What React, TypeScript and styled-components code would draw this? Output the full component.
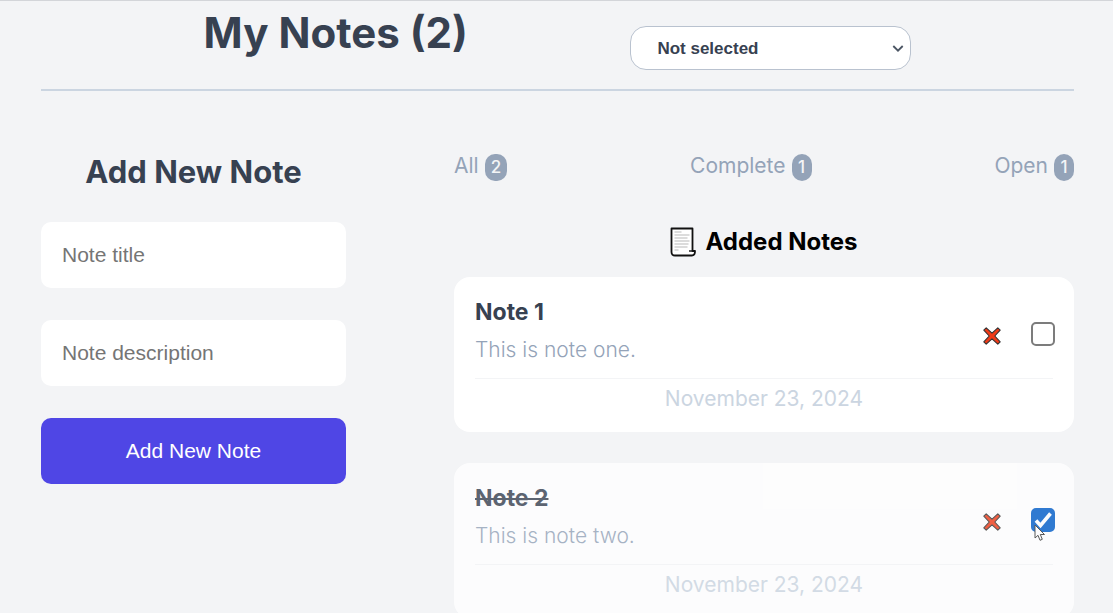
import React, { useState } from "react";
import styled, { createGlobalStyle } from "styled-components";

const GlobalStyle = createGlobalStyle`
  * { box-sizing: border-box; }
  html { scrollbar-width: none; background: #f3f4f6; }
  body { margin: 0; font-family: Inter, "Liberation Sans", sans-serif; color: #374151; }
  h1, h2, h3, p, ul { margin: 0; padding: 0; }
  button, input, select { font-family: "Liberation Sans", Arial, sans-serif; }
`;

const Page = styled.div`
  min-height: 100vh;
  padding: 0 39px 32px 41px;
  border-top: 1px solid #d3d5d9;
`;

const Header = styled.header`
  display: flex;
  justify-content: space-evenly;
  align-items: center;
  padding-top: 6px;
  border-bottom: 2px solid #cbd5e1;
`;

const Title = styled.h1`
  margin-bottom: 31px;
  font-size: 42px;
  line-height: 51px;
  font-weight: 700;
`;

const SelectWrap = styled.div`
  position: relative;
  width: 281px;
`;

const Select = styled.select`
  appearance: none;
  display: block;
  width: 100%;
  height: 44px;
  padding: 0 26px;
  border: 1px solid #b9c2cf;
  border-radius: 16px;
  background: #fff;
  color: #374151;
  font-size: 17px;
  font-weight: 700;
`;

const Chevron = styled.svg`
  position: absolute;
  right: 7px;
  top: 16px;
  pointer-events: none;
`;

const Main = styled.main`
  display: grid;
  grid-template-columns: minmax(0, 305fr) minmax(0, 620fr);
  gap: 108px;
  align-items: start;
  padding-top: 62px;
`;

const Form = styled.form`
  display: flex;
  flex-direction: column;
  gap: 32px;
`;

const FormTitle = styled.h2`
  font-size: 31px;
  line-height: 37px;
  font-weight: 700;
  text-align: center;
`;

const Field = styled.input`
  width: 100%;
  height: 66px;
  padding: 0 21px;
  border: 0;
  border-radius: 10px;
  background: #fff;
  font-size: 21px;
  &::placeholder { color: #757575; }
`;

const Submit = styled.button`
  height: 66px;
  border: 0;
  border-radius: 10px;
  background: #4f46e5;
  color: #fff;
  font-size: 21px;
`;

const Filters = styled.ul`
  display: flex;
  justify-content: space-between;
  list-style: none;
`;

const Filter = styled.button`
  display: flex;
  align-items: baseline;
  gap: 6px;
  padding: 0;
  border: 0;
  background: none;
  color: #94a3b8;
  font-family: Inter, sans-serif;
  font-size: 21px;
  line-height: 26px;
  font-weight: 400;
`;

const Badge = styled.span`
  min-width: 20px;
  padding: 3px 6px;
  border-radius: 10px;
  background: #94a3b8;
  color: #f3f4f6;
  font-size: 17px;
  line-height: 21px;
  font-weight: 500;
`;

const ListTitle = styled.h2`
  display: flex;
  justify-content: center;
  align-items: center;
  gap: 9px;
  margin: 46px 0 20px;
  color: #000;
  font-size: 24px;
  line-height: 30px;
  font-weight: 700;
`;

const Cards = styled.div`
  display: flex;
  flex-direction: column;
  gap: 31px;
`;

const Card = styled.article<{ $done: boolean }>`
  padding: 21px 21px 20px;
  border-radius: 16px;
  background: #fff;
  opacity: ${(p) => (p.$done ? 0.8 : 1)};
`;

const CardTop = styled.div`
  display: flex;
  justify-content: space-between;
  align-items: center;
  border-bottom: 1px solid #f3f4f6;
`;

const NoteTitle = styled.h3<{ $done: boolean }>`
  margin-bottom: 10px;
  font-size: 23px;
  line-height: 29px;
  font-weight: 700;
  text-decoration: ${(p) => (p.$done ? "line-through" : "none")};
`;

const NoteText = styled.p`
  padding-bottom: 15px;
  color: #94a3b8;
  font-size: 21px;
  line-height: 26px;
  font-weight: 300;
`;

const Actions = styled.div`
  display: flex;
  align-items: center;
  gap: 30px;
  margin-right: -2px;
  padding-bottom: 8px;
`;

const Delete = styled.button`
  display: flex;
  padding: 4px 0 0;
  border: 0;
  background: none;
`;

const CheckWrap = styled.div`
  position: relative;
  display: flex;
`;

const Check = styled.input`
  appearance: none;
  width: 24px;
  height: 24px;
  margin: 0;
  border: 2px solid #7c7c7c;
  border-radius: 5px;
  background: #fff;
  &:checked {
    border-color: #005cc8;
    background: #005cc8;
  }
`;

const Tick = styled.svg`
  position: absolute;
  inset: 0;
  pointer-events: none;
`;

const Pointer = styled.svg`
  position: absolute;
  left: 3px;
  top: 16px;
  pointer-events: none;
`;

const NoteDate = styled.time`
  display: block;
  padding-top: 7px;
  color: #cbd5e1;
  font-size: 21px;
  line-height: 26px;
  text-align: center;
`;

const PageIcon = () => (
  <svg width="26" height="30" viewBox="0 0 26 30" aria-hidden="true">
    <path d="M1.5 1.5h21v22.500h2.500c0 3-1 4.500-3 4.500H5c-2.300 0-3.500-1.300-3.500-3.500z" fill="#fff" stroke="#111" strokeWidth="1.800" strokeLinejoin="round" />
    <path d="M22.500 24h-3.500" stroke="#111" strokeWidth="1.400" />
    <path d="M4.500 5h7M4.500 8h15M4.500 11h13M4.500 14h15M4.500 17h14M4.500 20h13M4.500 23h4" stroke="#b9b9b9" strokeWidth="1.200" />
  </svg>
);

const CrossIcon = () => (
  <svg width="18" height="18" viewBox="0 0 18 18" aria-hidden="true">
    <path d="M3.200 .8 9 6.200 14.800 .8 17.200 3.200 11.800 9 17.200 14.800 14.800 17.200 9 11.800 3.200 17.200 .8 14.800 6.200 9 .8 3.200z" fill="#f03a17" stroke="#333" strokeWidth="1.100" strokeLinejoin="round" />
  </svg>
);

const notesData = [
  { id: 1, title: "Note 1", text: "This is note one.", date: "November 23, 2024", done: false },
  { id: 2, title: "Note 2", text: "This is note two.", date: "November 23, 2024", done: true },
];

export default function App() {
  const [notes, setNotes] = useState(notesData);
  const complete = notes.filter((n) => n.done).length;
  const filters = [
    { label: "All", count: notes.length },
    { label: "Complete", count: complete },
    { label: "Open", count: notes.length - complete },
  ];
  const toggle = (id: number) =>
    setNotes(notes.map((n) => (n.id === id ? { ...n, done: !n.done } : n)));

  return (
    <>
      <GlobalStyle />
      <Page>
        <Header>
          <Title>My Notes ({notes.length})</Title>
          <SelectWrap>
            <Select aria-label="Sort notes">
              <option>Not selected</option>
            </Select>
            <Chevron width="12" height="12" viewBox="0 0 12 12" fill="none" aria-hidden="true">
              <path d="M1.300 4 6 8.700l4.700-4.700" stroke="#4b5563" strokeWidth="1.800" />
            </Chevron>
          </SelectWrap>
        </Header>
        <Main>
          <Form onSubmit={(e) => e.preventDefault()}>
            <FormTitle>Add New Note</FormTitle>
            <Field aria-label="Note title" placeholder="Note title" />
            <Field aria-label="Note description" placeholder="Note description" />
            <Submit type="submit">Add New Note</Submit>
          </Form>
          <section>
            <Filters>
              {filters.map((f) => (
                <li key={f.label}>
                  <Filter type="button">
                    {f.label}
                    <Badge>{f.count}</Badge>
                  </Filter>
                </li>
              ))}
            </Filters>
            <ListTitle>
              <PageIcon />
              Added Notes
            </ListTitle>
            <Cards>
              {notes.map((n) => (
                <Card key={n.id} $done={n.done}>
                  <CardTop>
                    <div>
                      <NoteTitle $done={n.done}>{n.title}</NoteTitle>
                      <NoteText>{n.text}</NoteText>
                    </div>
                    <Actions>
                      <Delete
                        type="button"
                        aria-label={`Delete ${n.title}`}
                        onClick={() => setNotes(notes.filter((m) => m.id !== n.id))}
                      >
                        <CrossIcon />
                      </Delete>
                      <CheckWrap>
                        <Check
                          type="checkbox"
                          aria-label={`Complete ${n.title}`}
                          checked={n.done}
                          onChange={() => toggle(n.id)}
                        />
                        {n.done && (
                          <>
                            <Tick width="24" height="24" viewBox="0 0 24 24" fill="none" aria-hidden="true">
                              <path d="M5 12.500 9.500 17.500 19.500 5.500" stroke="#fff" strokeWidth="3.600" />
                            </Tick>
                            <Pointer width="12" height="18" viewBox="0 0 12 18" aria-hidden="true">
                              <path d="M1 1v13l3-2.700 2 5 2.300-1-2-4.800H10.500z" fill="#fff" stroke="#333" strokeWidth="1" strokeLinejoin="round" />
                            </Pointer>
                          </>
                        )}
                      </CheckWrap>
                    </Actions>
                  </CardTop>
                  <NoteDate>{n.date}</NoteDate>
                </Card>
              ))}
            </Cards>
          </section>
        </Main>
      </Page>
    </>
  );
}
